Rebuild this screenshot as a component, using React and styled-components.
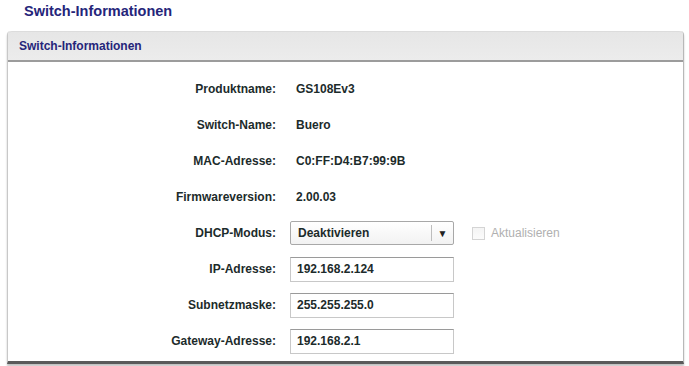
import React from 'react'
import styled, { createGlobalStyle } from 'styled-components'

const GlobalStyle = createGlobalStyle`
  body {
    margin: 0;
    background: #fff;
    font-family: "Liberation Sans", Arial, sans-serif;
  }
`

const Page = styled.div`
  width: 689px;
  height: 366px;
  overflow: hidden;
`

const PageTitle = styled.h1`
  margin: 0;
  height: 31px;
  padding: 3px 0 0 24px;
  box-sizing: border-box;
  font-size: 14.5px;
  font-weight: bold;
  color: #25257a;
`

const Panel = styled.div`
  margin-left: 7px;
  width: 677px;
  border-left: 1px solid #c8c8c8;
  border-right: 1px solid #b8b8b8;
  border-top-left-radius: 4px;
  border-top-right-radius: 4px;
  border-bottom: 3px solid #5a5a5a;
  box-shadow: 0 2px 2px rgba(0, 0, 0, 0.25);
  box-sizing: border-box;
`

const PanelHeader = styled.div`
  height: 31px;
  display: flex;
  align-items: center;
  padding-left: 11px;
  background: linear-gradient(#e6e6e6, #ececec);
  border-top: 1px solid #dcdcdc;
  border-top-left-radius: 4px;
  border-top-right-radius: 4px;
  border-bottom: 2px solid #9c9c9c;
  box-sizing: border-box;
  font-size: 12px;
  font-weight: bold;
  color: #25257a;
`

const PanelBody = styled.div`
  padding: 9px 0 2px;
  background: #fff;
`

const Row = styled.div`
  height: 36px;
  display: grid;
  grid-template-columns: 268px 1fr;
  column-gap: 14px;
  align-items: center;
`

const Label = styled.div`
  text-align: right;
  font-size: 12px;
  font-weight: bold;
  color: #1c2b2b;
`

const Value = styled.div`
  display: flex;
  align-items: center;
  gap: 18px;
  padding-left: ${p => (p.$plain ? '6px' : '0')};
  font-size: 12px;
  font-weight: bold;
  color: #1c2b2b;
`

const Select = styled.div`
  width: 164px;
  height: 24px;
  display: flex;
  align-items: center;
  border: 1px solid #a8a8a8;
  border-radius: 2px;
  background: linear-gradient(#ffffff, #f2f2f2);
  box-sizing: border-box;
`

const SelectText = styled.span`
  flex: 1;
  padding-left: 7px;
  font-size: 12px;
  font-weight: bold;
  color: #1c2b2b;
`

const SelectArrow = styled.span`
  width: 21px;
  height: 16px;
  display: flex;
  align-items: center;
  justify-content: center;
  border-left: 1px solid #bdbdbd;
  font-size: 10px;
  color: #222;
`

const CheckWrap = styled.label`
  display: flex;
  align-items: center;
  gap: 6px;
  font-size: 12px;
  font-weight: normal;
  color: #b0b0b0;
`

const CheckBox = styled.span`
  width: 13px;
  height: 13px;
  border: 1px solid #d4d4d4;
  background: linear-gradient(#f4f4f4, #fbfbfb);
  box-sizing: border-box;
`

const Input = styled.div`
  width: 164px;
  height: 25px;
  display: flex;
  align-items: center;
  padding-left: 6px;
  border: 1px solid #c8c8c8;
  border-top-color: #9a9a9a;
  box-sizing: border-box;
  background: #fff;
  font-size: 12px;
  font-weight: bold;
  color: #1c2b2b;
`

const info = [
  ['Produktname:', 'GS108Ev3'],
  ['Switch-Name:', 'Buero'],
  ['MAC-Adresse:', 'C0:FF:D4:B7:99:9B'],
  ['Firmwareversion:', '2.00.03'],
]

const fields = [
  ['IP-Adresse:', '192.168.2.124'],
  ['Subnetzmaske:', '255.255.255.0'],
  ['Gateway-Adresse:', '192.168.2.1'],
]

export default function App() {
  return (
    <Page>
      <GlobalStyle />
      <PageTitle>Switch-Informationen</PageTitle>
      <Panel>
        <PanelHeader>Switch-Informationen</PanelHeader>
        <PanelBody>
          {info.map(([label, value]) => (
            <Row key={label}>
              <Label>{label}</Label>
              <Value $plain>{value}</Value>
            </Row>
          ))}
          <Row>
            <Label>DHCP-Modus:</Label>
            <Value>
              <Select>
                <SelectText>Deaktivieren</SelectText>
                <SelectArrow>▼</SelectArrow>
              </Select>
              <CheckWrap>
                <CheckBox />
                Aktualisieren
              </CheckWrap>
            </Value>
          </Row>
          {fields.map(([label, value]) => (
            <Row key={label}>
              <Label>{label}</Label>
              <Value>
                <Input>{value}</Input>
              </Value>
            </Row>
          ))}
        </PanelBody>
      </Panel>
    </Page>
  )
}
